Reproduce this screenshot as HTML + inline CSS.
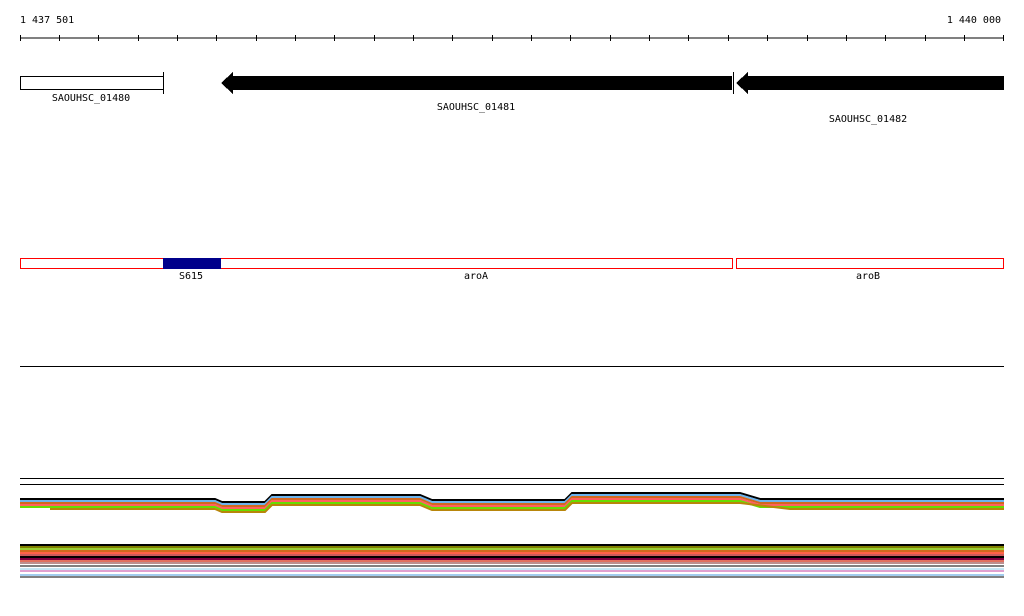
<!DOCTYPE html>
<html><head><style>
body{margin:0;background:#fff;width:1024px;height:611px;overflow:hidden}
svg text{font-family:"DejaVu Sans Mono","Liberation Mono",monospace;font-size:10px;fill:#000}
</style></head><body>
<svg width="1024" height="611" xmlns="http://www.w3.org/2000/svg" shape-rendering="crispEdges">
<text x="20" y="23">1 437 501</text>
<text x="1001" y="23" text-anchor="end">1 440 000</text>
<line x1="20" y1="38" x2="1004" y2="38" stroke="#000"/>
<g stroke="#000">
<path d="M20.5 35v6M59.5 35v6M98.5 35v6M138.5 35v6M177.5 35v6M216.5 35v6M256.5 35v6M295.5 35v6M334.5 35v6M374.5 35v6M413.5 35v6M452.5 35v6M492.5 35v6M531.5 35v6M570.5 35v6M610.5 35v6M649.5 35v6M688.5 35v6M728.5 35v6M767.5 35v6M807.5 35v6M846.5 35v6M885.5 35v6M925.5 35v6M964.5 35v6M1003.5 35v6"/>
</g>
<rect x="20.5" y="76.5" width="143" height="13" fill="#fff" stroke="#000"/>
<line x1="163.5" y1="72" x2="163.5" y2="94" stroke="#000"/>
<text x="91" y="101" text-anchor="middle">SAOUHSC_01480</text>
<path d="M221 83 L233 72 L233 76 L732 76 L732 90 L233 90 L233 94 Z" fill="#000"/>
<line x1="733.5" y1="72" x2="733.5" y2="94" stroke="#000"/>
<path d="M736 83 L748 72 L748 76 L1004 76 L1004 90 L748 90 L748 94 Z" fill="#000"/>
<text x="476" y="110" text-anchor="middle">SAOUHSC_01481</text>
<text x="868" y="122" text-anchor="middle">SAOUHSC_01482</text>
<rect x="20.5" y="258.5" width="712" height="10" fill="none" stroke="#f00"/>
<rect x="163" y="258" width="58" height="11" fill="#00008b"/>
<rect x="736.5" y="258.5" width="267" height="10" fill="none" stroke="#f00"/>
<text x="191" y="279" text-anchor="middle">S615</text>
<text x="476" y="279" text-anchor="middle">aroA</text>
<text x="868" y="279" text-anchor="middle">aroB</text>
<line x1="20" y1="366.5" x2="1004" y2="366.5" stroke="#000"/>
<line x1="20" y1="478.5" x2="1004" y2="478.5" stroke="#000"/>
<line x1="20" y1="484.5" x2="1004" y2="484.5" stroke="#000"/>
<g fill="none" stroke-width="2" shape-rendering="auto">
<path d="M20 499 H215 L222 502 H265 L272 495 H420 L432 500 H565 L572 493 H740 L760 499 H1004" stroke="#000"/>
<path d="M20 501 H215 L222 504 H265 L272 497 H420 L432 502 H565 L572 495 H740 L760 501 H1004" stroke="#6cb4ee"/>
<path d="M20 503 H215 L222 506 H265 L272 499 H420 L432 504 H565 L572 497 H740 L760 503 H1004" stroke="#d2691e"/>
<path d="M20 505 H215 L222 508 H265 L272 501 H420 L432 506 H565 L572 499 H740 L760 505 H1004" stroke="#ff6060"/>
<path d="M20 507 H215 L222 510 H265 L272 503 H420 L432 508 H565 L572 501 H740 L760 507 H1004" stroke="#66dd00"/>
<path d="M50 509 H215 L222 512 H265 L272 505 H420 L432 510 H565 L572 503 H740 L790 509 H1004" stroke="#b8860b"/>
<path d="M20 545 H1004" stroke="#000"/>
<path d="M20 547 H1004" stroke="#808000"/>
<path d="M20 549 H1004" stroke="#9acd32"/>
<path d="M20 551 H1004" stroke="#d2691e"/>
<path d="M20 553 H1004" stroke="#ff6347"/>
<path d="M20 555 H1004" stroke="#cd5c5c"/>
<path d="M20 557 H1004" stroke="#000"/>
<path d="M20 559 H1004" stroke="#800040"/>
<path d="M20 561 H1004" stroke="#e07060"/>
<path d="M20 563 H1004" stroke="#bc8f8f"/>
<path d="M20 566 H1004" stroke="#000" stroke-width="1"/>
<path d="M20 569 H1004" stroke="#87ceeb" stroke-width="1"/>
<path d="M20 571 H1004" stroke="#c040a0" stroke-width="1"/>
<path d="M20 575 H1004" stroke="#4499dd" stroke-width="1"/>
<path d="M20 577 H1004" stroke="#000" stroke-width="1"/>
</g>
</svg>
</body></html>
